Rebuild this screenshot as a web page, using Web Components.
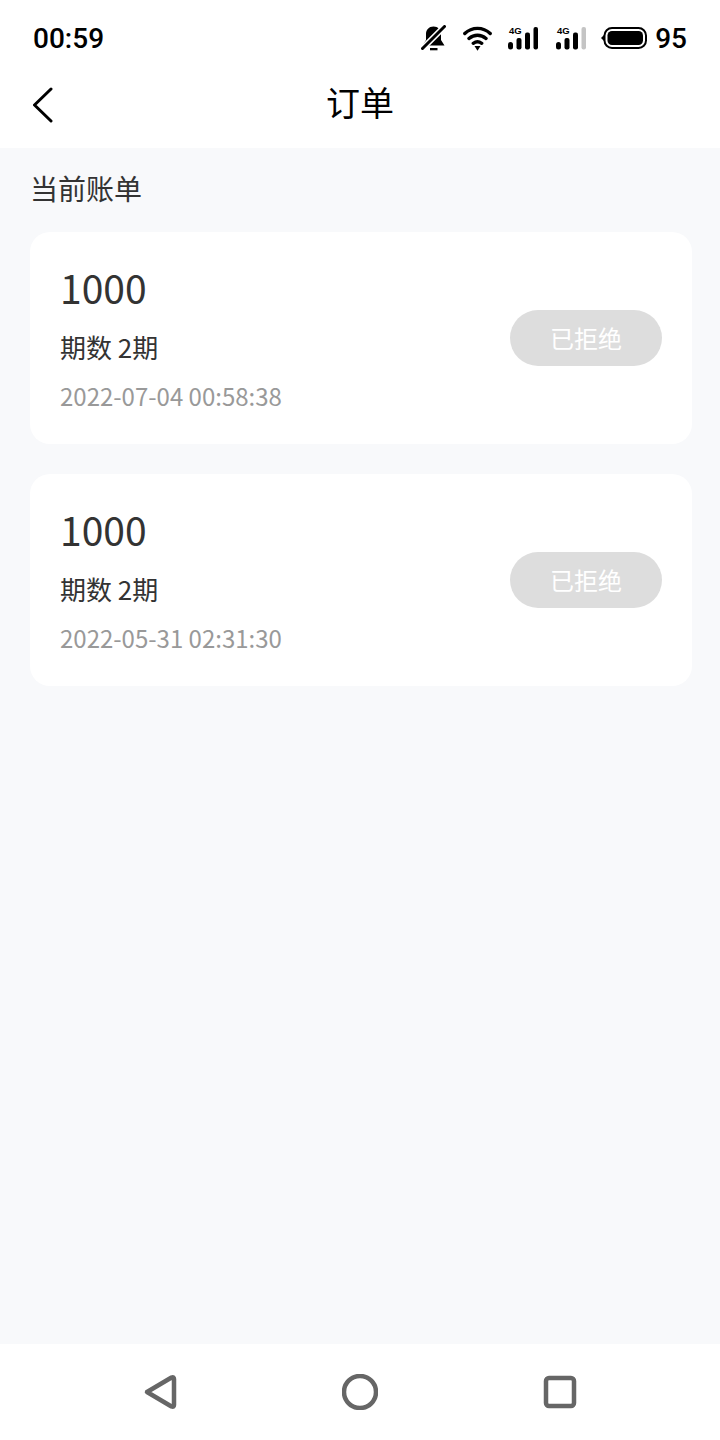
<!DOCTYPE html>
<html lang="zh">
<head>
<meta charset="utf-8">
<title>订单</title>
<style>
	html, body {
		margin: 0;
		padding: 0;
		height: 1440px;
		background: #f8f9fb;
		font-family: "Noto Sans CJK SC", "Noto Sans", sans-serif;
	}
</style>
</head>
<body>
<order-app></order-app>

<script>
// Status bar: clock on the left, system icons on the right
class StatusBar extends HTMLElement {
	constructor() {
		super();
		this.attachShadow({mode:'open'});
		this.shadowRoot.innerHTML = `
			<style>
				:host {
					display: flex;
					align-items: center;
					justify-content: space-between;
					height: 76px;
					padding: 0 33px;
					box-sizing: border-box;
					background: #fff;
					color: #000;
				}
				.time, .batt {
					padding-top: 2px;
					font: 500 28px/1 Roboto, sans-serif;
				}
				.icons {
					display: flex;
					align-items: center;
				}
				svg {
					display: block;
				}
				.batt {
					margin-left: 8px;
				}
				.sig text {
					font: 700 9.500px "Liberation Sans", sans-serif;
				}
			</style>
			<span class="time">00:59</span>
			<div class="icons">
				<!-- muted bell -->
				<svg width="25" height="26" viewBox="0 0 25 26" style="margin-right:17px">
					<path d="M12.500 1.500c-4.500 0-7.500 3.200-7.500 7.500v6L1.500 20.500h22L20 15V9c0-4.300-3-7.500-7.500-7.500z" fill="#000"/>
					<path d="M9 23h7.500v2.300H9z" fill="#000"/>
					<path d="M-1 26L25 0" stroke="#fff" stroke-width="6"/>
					<path d="M1.500 23.500L23.500 1.500" stroke="#000" stroke-width="3" stroke-linecap="round"/>
				</svg>
				<!-- wifi -->
				<svg width="29" height="26" viewBox="0 0 29 26" style="margin-right:16px">
					<path d="M1.800 8.500C9 1.700 20 1.700 27.200 8.500M6 13.500C11 9.200 18 9.200 23 13.500M10.300 18.300C13 16.400 16 16.400 18.700 18.300" fill="none" stroke="#000" stroke-width="3.400" stroke-linecap="round"/>
					<path d="M11.500 21h6L14.500 25.800z" fill="#000"/>
				</svg>
				<!-- sim 1 -->
				<svg class="sig" width="30" height="24" viewBox="0 0 30 24" style="margin-right:18px">
					<text x="1" y="8">4G</text>
					<rect x="0" y="16" width="5" height="7.500" rx="2.500" fill="#000"/>
					<rect x="8.500" y="12" width="5" height="11.500" rx="2" fill="#000"/>
					<rect x="17" y="6.500" width="5" height="17" rx="2" fill="#000"/>
					<rect x="25.500" y="1" width="4.500" height="22.500" rx="2" fill="#000"/>
				</svg>
				<!-- sim 2 -->
				<svg class="sig" width="30" height="24" viewBox="0 0 30 24" style="margin-right:15px">
					<text x="1" y="8">4G</text>
					<rect x="0" y="16" width="5" height="7.500" rx="2.500" fill="#000"/>
					<rect x="8.500" y="12" width="5" height="11.500" rx="2" fill="#000"/>
					<rect x="17" y="6.500" width="5" height="17" rx="2" fill="#000"/>
					<rect x="25.500" y="1" width="4.500" height="22.500" rx="2" fill="#c4c4c4"/>
				</svg>
				<!-- battery -->
				<svg width="46" height="22" viewBox="0 0 46 22">
					<path d="M0 11l3-3v6z" fill="#000"/>
					<rect x="3.500" y="1" width="41.500" height="20" rx="7.500" fill="none" stroke="#000" stroke-width="2"/>
					<rect x="6.500" y="4" width="35.500" height="14" rx="4.500" fill="#000"/>
				</svg>
				<span class="batt">95</span>
			</div>
		`;
	}
}

// Title bar with the back arrow
class NavBar extends HTMLElement {
	constructor() {
		super();
		this.attachShadow({mode:'open'});
		this.shadowRoot.innerHTML = `
			<style>
				:host {
					display: grid;
					grid-template-columns: 1fr auto 1fr;
					align-items: start;
					height: 72px;
					padding: 0 33px;
					box-sizing: border-box;
					background: #fff;
					color: #000;
				}
				svg {
					display: block;
					margin-top: 11px;
				}
				.title {
					font-size: 34px;
					line-height: 52px;
				}
			</style>
			<svg width="20" height="36" viewBox="0 0 20 36">
				<path d="M18 2L1.500 18 18 34" fill="none" stroke="#000" stroke-width="3" stroke-linecap="round" stroke-linejoin="round"/>
			</svg>
			<span class="title"><slot></slot></span>
			<span></span>
		`;
	}
}

// One order: amount, instalments and date on the left, state pill on the right
class OrderCard extends HTMLElement {
	constructor() {
		super();
		this.attachShadow({mode:'open'});
		this.shadowRoot.innerHTML = `
			<style>
				:host {
					display: flex;
					align-items: center;
					justify-content: space-between;
					height: 212px;
					margin-bottom: 30px;
					padding: 0 30px;
					box-sizing: border-box;
					background: #fff;
					border-radius: 20px;
				}
				.info {
					display: flex;
					flex-direction: column;
					margin-bottom: 2px;
				}
				.amount {
					font-size: 39px;
					line-height: 58px;
					color: #333;
				}
				.periods {
					margin-top: 9px;
					font-size: 26px;
					line-height: 44px;
					color: #333;
				}
				.date {
					margin-top: 7px;
					font-size: 24px;
					line-height: 40px;
					color: #999;
				}
				.pill {
					display: flex;
					align-items: center;
					justify-content: center;
					width: 152px;
					height: 54px;
					padding-bottom: 2px;
					border-radius: 28px;
					background: #ddd;
					color: #fff;
					font-size: 24px;
				}
			</style>
			<div class="info">
				<span class="amount"></span>
				<span class="periods"></span>
				<span class="date"></span>
			</div>
			<span class="pill"><slot></slot></span>
		`;
	}

	set data(data) {
		if (!data) return;
		this.shadowRoot.querySelector('.amount').textContent = data.amount;
		this.shadowRoot.querySelector('.periods').textContent = data.periods;
		this.shadowRoot.querySelector('.date').textContent = data.date;
		this.textContent = data.state;
	}
}

// Android style navigation keys at the bottom
class SystemNav extends HTMLElement {
	constructor() {
		super();
		this.attachShadow({mode:'open'});
		this.shadowRoot.innerHTML = `
			<style>
				:host {
					display: flex;
					align-items: center;
					justify-content: center;
					gap: 164px;
					height: 96px;
					background: #fff;
				}
				svg {
					display: block;
					fill: none;
					stroke: #666;
					stroke-width: 4.500;
					stroke-linejoin: round;
				}
			</style>
			<svg width="36" height="36" viewBox="0 0 36 36">
				<path d="M5 18L29.500 3.500Q32 2.500 32 5V31Q32 33.500 29.500 32.500Z"/>
			</svg>
			<svg width="36" height="36" viewBox="0 0 36 36">
				<circle cx="18" cy="18" r="16"/>
			</svg>
			<svg width="36" height="36" viewBox="0 0 36 36">
				<rect x="4" y="4" width="28" height="28" rx="3"/>
			</svg>
		`;
	}
}

// The whole screen
class OrderApp extends HTMLElement {
	constructor() {
		super();
		this.attachShadow({mode:'open'});
		this.shadowRoot.innerHTML = `
			<style>
				:host {
					display: flex;
					flex-direction: column;
					height: 1440px;
				}
				main {
					flex: 1;
					display: flex;
					flex-direction: column;
					padding: 0 28px 0 30px;
				}
				h2 {
					margin: 0;
					height: 84px;
					line-height: 80px;
					font-size: 28px;
					font-weight: 400;
					color: #333;
				}
			</style>
			<status-bar></status-bar>
			<nav-bar>订单</nav-bar>
			<main><h2>当前账单</h2></main>
			<system-nav></system-nav>
		`;
		this._main = this.shadowRoot.querySelector('main');
		this._orders = [
			{amount: '1000', periods: '期数 2期', date: '2022-07-04 00:58:38', state: '已拒绝'},
			{amount: '1000', periods: '期数 2期', date: '2022-05-31 02:31:30', state: '已拒绝'}
		];
	}

	connectedCallback() {
		this._orders.forEach((order) => {
			const card = document.createElement('order-card');
			this._main.appendChild(card);
			card.data = order;
		});
	}
}

customElements.define('status-bar', StatusBar);
customElements.define('nav-bar', NavBar);
customElements.define('order-card', OrderCard);
customElements.define('system-nav', SystemNav);
customElements.define('order-app', OrderApp);
</script>
</body>
</html>
